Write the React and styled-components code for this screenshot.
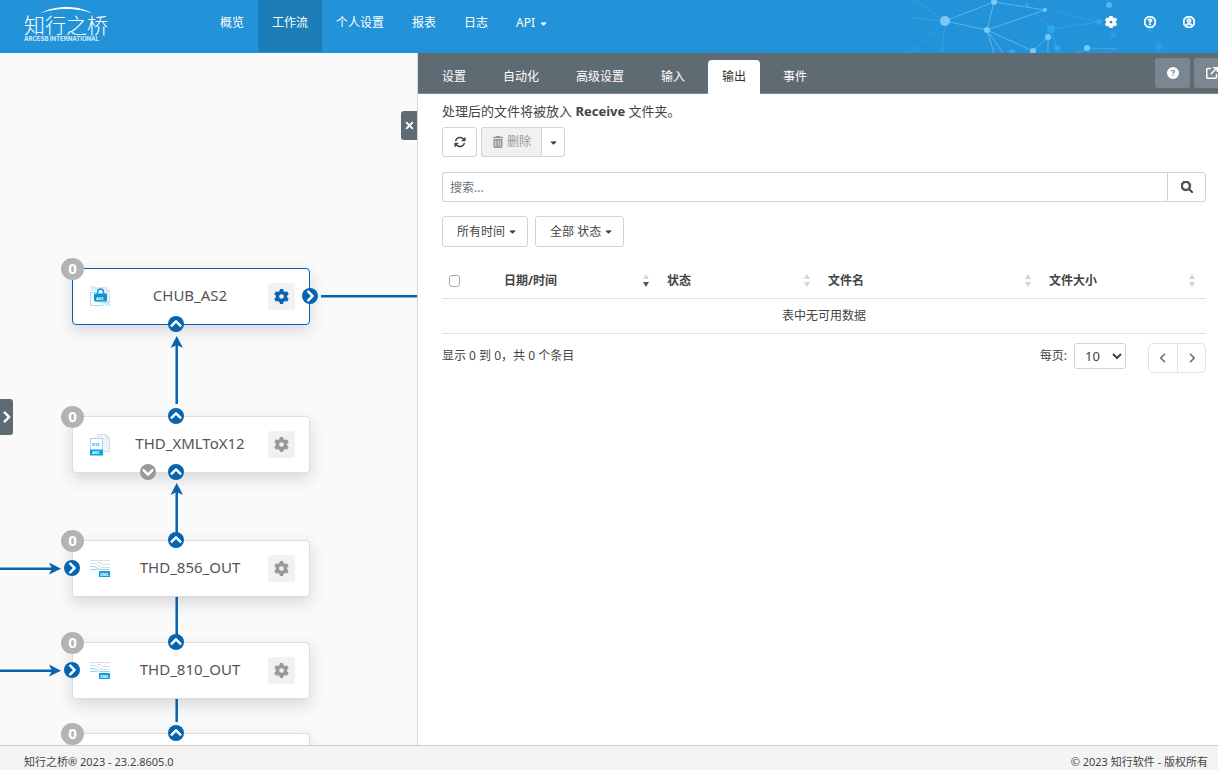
import React, { useState } from 'react';
import styled, { createGlobalStyle, css } from 'styled-components';
import {
  FaGear,
  FaRegCircleQuestion,
  FaRegCircleUser,
  FaCircleQuestion,
  FaArrowUpRightFromSquare,
  FaArrowsRotate,
  FaTrashCan,
  FaMagnifyingGlass,
  FaXmark,
  FaAngleLeft,
  FaAngleRight,
  FaAngleUp,
  FaAngleDown,
  FaCaretDown,
} from 'react-icons/fa6';

const navItems = ['概览', '工作流', '个人设置', '报表', '日志'];
const tabs = ['设置', '自动化', '高级设置', '输入', '输出', '事件'];

// ports are [direction, x, y] measured from the node's corner
const nodes = [
  { id: 1, name: 'CHUB_AS2', icon: 'as2', top: 215, selected: true, ports: [['right', 238, 28], ['up', 104, 56]] },
  { id: 2, name: 'THD_XMLToX12', icon: 'x12', top: 363, ports: [['up', 104, 0], ['down', 76, 56], ['up', 104, 56]] },
  { id: 3, name: 'THD_856_OUT', icon: 'xml', top: 487, ports: [['up', 104, 0], ['right', 0, 28]] },
  { id: 4, name: 'THD_810_OUT', icon: 'xml', top: 589, ports: [['up', 104, 0], ['right', 0, 28]] },
  { id: 5, top: 680, ports: [['up', 104, 0]] },
];

const columns = [
  { label: '日期/时间', width: 163, sorted: true },
  { label: '状态', width: 161 },
  { label: '文件名', width: 221 },
  { label: '文件大小', width: 164 },
];

const portIcons = { up: FaAngleUp, down: FaAngleDown, right: FaAngleRight };

function App() {
  const [tab, setTab] = useState('输出');

  return (
    <Page>
      <GlobalStyle />
      <Header />
      <Main>
        <Flow />
        <Panel>
          <TabBar>
            {tabs.map((label) => (
              <Tab key={label} type="button" $active={tab === label} onClick={() => setTab(label)}>
                {label}
              </Tab>
            ))}
            <TabTools>
              <ToolButton type="button" aria-label="帮助"><FaCircleQuestion /></ToolButton>
              <ToolButton type="button" aria-label="打开"><FaArrowUpRightFromSquare /></ToolButton>
            </TabTools>
          </TabBar>
          <Output />
        </Panel>
      </Main>
      <Footer>
        <span>知行之桥® 2023 - 23.2.8605.0</span>
        <span>© 2023 知行软件 - 版权所有</span>
      </Footer>
    </Page>
  );
}

export default App;

function Header() {
  return (
    <TopBar>
      <Network />
      <Brand href="#" aria-label="知行之桥">
        <svg width="90" height="44" viewBox="0 0 90 44">
          <path d="M16 13.5C29 5.5 54 4.5 68 13.5C54 7.5 30 7.5 16 13.5Z" fill="#fff" />
          <LogoName x="0" y="33">知行之桥</LogoName>
          <LogoSub x="0" y="41">ARCESB INTERNATIONAL</LogoSub>
        </svg>
      </Brand>
      <Nav>
        {navItems.map((item) => (
          <NavLink key={item} href="#" $active={item === '工作流'}>{item}</NavLink>
        ))}
        <NavLink href="#">API <FaCaretDown size={9} /></NavLink>
      </Nav>
      <TopIcons>
        <TopIcon type="button" aria-label="设置"><FaGear /></TopIcon>
        <TopIcon type="button" aria-label="帮助"><FaRegCircleQuestion /></TopIcon>
        <TopIcon type="button" aria-label="用户"><FaRegCircleUser /></TopIcon>
      </TopIcons>
    </TopBar>
  );
}

function Network() {
  return (
    <NetworkSvg width="320" height="53" viewBox="898 0 320 53">
      <g stroke="#8fd0f6" fill="none" opacity=".55">
        <path d="M945 21L994 2L987 30L945 21M994 2L1045 10L987 30L1033 51L1048 37V53M987 30L994 53M987 30L1003 53" />
        <path d="M945 21L915 0M945 21L910 53M945 21L942 53M945 21L912 18" opacity=".4" />
        <path d="M1078 53L1087 48L1118 49" opacity=".6" />
      </g>
      <path d="M1036 14L1051 29L1057 48M1051 29L1099 22L1054 11" stroke="#35aef2" fill="none" opacity=".6" />
      <g fill="#7cc8f5">
        <circle cx="945" cy="21" r="5" />
        <circle cx="994" cy="2" r="3" />
        <circle cx="987" cy="30" r="3" />
        <circle cx="1045" cy="10" r="2" />
        <circle cx="1048" cy="37" r="3" />
        <circle cx="1033" cy="51" r="3" />
        <circle cx="1087" cy="48" r="3" />
        <circle cx="1109" cy="5" r="3" opacity=".6" />
      </g>
      <g fill="#2aa9f0">
        <circle cx="1051" cy="29" r="4" />
        <circle cx="1057" cy="48" r="3" />
        <circle cx="1012" cy="52" r="3" />
        <circle cx="1027" cy="5" r="2" />
        <circle cx="1099" cy="22" r="3" />
        <circle cx="1113" cy="35" r="3" opacity=".5" />
        <circle cx="1159" cy="46" r="4" opacity=".5" />
        <circle cx="1150" cy="29" r="3" opacity=".5" />
      </g>
    </NetworkSvg>
  );
}

function Flow() {
  return (
    <Canvas>
      <Wires>
        <g stroke="#0664b1" strokeWidth="2.5">
          <path d="M321 243.3H900" />
          <path d="M176.7 289V351M176.7 437V481M176.7 544V585M176.7 646V669" />
          <path d="M0 515.7H54M0 617.7H54" />
        </g>
        <g fill="#0664b1">
          <path d="M176.7 283L183 295L176.7 292L170.5 295Z" />
          <path d="M176.7 430L183 442L176.7 439L170.5 442Z" />
          <path d="M61 515.7L49 509.5L52 515.7L49 521.5Z" />
          <path d="M61 617.7L49 611.5L52 617.7L49 623.5Z" />
        </g>
      </Wires>
      {nodes.map((node) => (
        <Node key={node.id} $top={node.top} $selected={node.selected}>
          {node.name && (
            <>
              <NodeIcon kind={node.icon} />
              <NodeName>{node.name}</NodeName>
              <NodeButton type="button" aria-label={node.name} $selected={node.selected}><FaGear /></NodeButton>
            </>
          )}
          <Badge>0</Badge>
          {node.ports.map(([dir, x, y]) => {
            const Icon = portIcons[dir];
            return <Port key={`${x}-${y}`} $x={x} $y={y} $muted={dir === 'down'}><Icon /></Port>;
          })}
        </Node>
      ))}
      <Drawer type="button" aria-label="展开"><FaAngleRight /></Drawer>
      <CloseTab type="button" aria-label="关闭"><FaXmark /></CloseTab>
    </Canvas>
  );
}

function NodeIcon({ kind }) {
  if (kind === 'as2') {
    return (
      <svg width="22" height="22" viewBox="0 0 22 22" fill="none">
        <path d="M7.500 1.500H16L19.500 5V16.500H7.500Z" fill="#eef0f5" stroke="#dfe2ea" />
        <path d="M16 1.500V5H19.500" stroke="#d9dce6" />
        <path d="M6 6.500H.5V19.500H12.500V17" stroke="#a5def7" />
        <path d="M1 .5L3 2.500L1 4.500M4 .5L6 2.500L4 4.500M17 15.500L15 17.500L17 19.500M20 15.500L18 17.500L20 19.500" stroke="#4fbdec" strokeWidth=".8" />
        <path d="M7.500 8V6A3 3 0 0 1 13.500 6V8" stroke="#0796d8" strokeWidth="1.400" />
        <rect x="4" y="7.500" width="13" height="8" rx="1" fill="#0796d8" />
        <IconText x="6" y="13.500">AS2</IconText>
      </svg>
    );
  }
  if (kind === 'x12') {
    return (
      <svg width="22" height="22" viewBox="0 0 22 22" fill="none">
        <path d="M7.500 .5H16L19.500 4V17.500H7.500Z" fill="#f1f2f6" stroke="#dcdee6" />
        <path d="M16 .5V4H19.500" stroke="#dcdee6" />
        <rect x=".5" y="4.500" width="12" height="16" fill="#fff" stroke="#9bdcf7" />
        <IconText x="2" y="12" $blue>X12</IconText>
        <rect x="0" y="15.500" width="13" height="6" fill="#0ba0e0" />
        <IconText x="2" y="20">ASC</IconText>
      </svg>
    );
  }
  return (
    <svg width="22" height="22" viewBox="0 0 22 22" fill="none">
      <path d="M0 2.500H20M0 5.500H5L11 9.500H20M7 4.500H10L13 6.500H20" stroke="#cfd4de" strokeWidth=".8" />
      <path d="M0 8.500H4L10 11.500H20M0 11.500H7" stroke="#83c9eb" strokeWidth=".8" />
      <rect x="9" y="13" width="11" height="6" fill="#0ba0e0" />
      <IconText x="10" y="17.500">XML</IconText>
    </svg>
  );
}

function Output() {
  return (
    <Content>
      <Hint>处理后的文件将被放入 <b>Receive</b> 文件夹。</Hint>
      <Actions>
        <IconButton type="button" aria-label="刷新"><FaArrowsRotate /></IconButton>
        <Split>
          <DeleteButton type="button" disabled><FaTrashCan />删除</DeleteButton>
          <SplitToggle type="button" aria-label="更多"><FaCaretDown size={9} /></SplitToggle>
        </Split>
      </Actions>
      <Search>
        <SearchInput type="text" placeholder="搜索..." aria-label="搜索" />
        <SearchButton type="button" aria-label="搜索"><FaMagnifyingGlass /></SearchButton>
      </Search>
      <Filters>
        <FilterButton type="button">所有时间<FaCaretDown size={9} /></FilterButton>
        <FilterButton type="button">全部 状态<FaCaretDown size={9} /></FilterButton>
      </Filters>
      <Table>
        <colgroup>
          <Col $width={55} />
          {columns.map((col) => <Col key={col.label} $width={col.width} />)}
        </colgroup>
        <thead>
          <tr>
            <Th><Checkbox type="checkbox" aria-label="全选" /></Th>
            {columns.map((col) => (
              <Th key={col.label}>
                <Sortable>
                  {col.label}
                  <svg width="8" height="14" viewBox="0 0 8 14">
                    <path d="M4 0L7 5H1Z" fill="#d3d5d8" />
                    <path d="M4 13L7 8H1Z" fill={col.sorted ? '#555' : '#d3d5d8'} />
                  </svg>
                </Sortable>
              </Th>
            ))}
          </tr>
        </thead>
        <tbody>
          <tr><Empty colSpan={5}>表中无可用数据</Empty></tr>
        </tbody>
      </Table>
      <Pager>
        <PagerInfo>显示 0 到 0，共 0 个条目</PagerInfo>
        <PageSize>
          每页:
          <PageSelect defaultValue="10">
            <option>10</option>
            <option>25</option>
            <option>50</option>
          </PageSelect>
        </PageSize>
        <PageButtons>
          <PageButton type="button" aria-label="上一页"><FaAngleLeft /></PageButton>
          <PageButton type="button" aria-label="下一页"><FaAngleRight /></PageButton>
        </PageButtons>
      </Pager>
    </Content>
  );
}

const GlobalStyle = createGlobalStyle`
  * {
    box-sizing: border-box;
  }

  body {
    margin: 0;
    color: #444;
    font-family: "Noto Sans", "Noto Sans CJK SC", sans-serif;
    font-size: 12px;
    line-height: 18px;
  }

  button, input, select {
    margin: 0;
    font: inherit;
    color: inherit;
  }

  button {
    display: flex;
    align-items: center;
    justify-content: center;
    padding: 0;
    border: 0;
    cursor: pointer;
  }
`

// thickens the outline of the thinner glyph icons
const boldIcon = css`
  svg path {
    stroke: currentColor;
    stroke-width: 36;
  }
`

const Page = styled.div`
  display: flex;
  flex-direction: column;
  height: 100vh;
  overflow: hidden;
`

const TopBar = styled.header`
  position: relative;
  display: flex;
  flex: none;
  height: 53px;
  padding: 0 10px 1px 24px;
  background: #2293d8;
  color: #fff;
`

const NetworkSvg = styled.svg`
  position: absolute;
  top: 0;
  right: 0;
`

const Brand = styled.a`
  width: 182px;
`

const LogoName = styled.text`
  fill: #fff;
  font-family: "Noto Sans CJK SC", sans-serif;
  font-size: 21px;
  font-weight: 300;
`

const LogoSub = styled.text`
  fill: #d5ebf9;
  font-family: Inter, sans-serif;
  font-size: 6px;
  font-weight: 700;
`

const Nav = styled.nav`
  display: flex;
`

const NavLink = styled.a`
  display: flex;
  align-items: center;
  gap: 4px;
  padding: 0 14px 6px;
  color: #fff;
  text-decoration: none;
  background: ${props => props.$active ? '#1c7db8' : 'transparent'};
`

const TopIcons = styled.div`
  position: relative;
  display: flex;
  margin-left: auto;
  padding-bottom: 8px;
`

const TopIcon = styled.button`
  ${boldIcon}
  width: 39px;
  background: none;
  font-size: 12px;
`

const Main = styled.main`
  display: grid;
  grid-template-columns: minmax(0, 417fr) minmax(0, 801fr);
  flex: 1;
  min-height: 0;
`

const Canvas = styled.section`
  position: relative;
  overflow: hidden;
  background: #fafafa;
`

const Wires = styled.svg`
  position: absolute;
  width: 100%;
  height: 100%;
  fill: none;
`

const Node = styled.div`
  position: absolute;
  top: ${props => props.$top}px;
  left: 72px;
  display: flex;
  align-items: center;
  width: 238px;
  height: 57px;
  padding: 0 14px 0 17px;
  border: 1px solid ${props => props.$selected ? '#0664b1' : '#ddd'};
  border-radius: 4px;
  background: #fff;
  box-shadow: 0 6px 16px rgba(40, 40, 60, .16);
`

const NodeName = styled.span`
  flex: 1;
  padding-bottom: 4px;
  color: #555;
  font-size: 15px;
  line-height: 20px;
  text-align: center;
`

const IconText = styled.text`
  fill: ${props => props.$blue ? '#0ba0e0' : '#fff'};
  font-size: 4px;
  font-weight: 700;
`

const NodeButton = styled.button`
  width: 27px;
  height: 27px;
  border-radius: 3px;
  background: #f1f1f1;
  color: ${props => props.$selected ? '#0664b1' : '#999'};
  font-size: 15px;
`

const Badge = styled.span`
  position: absolute;
  top: -11px;
  left: -12px;
  width: 23px;
  height: 22px;
  border-radius: 50%;
  background: #b3b3b3;
  color: #fff;
  font-size: 15px;
  font-weight: 700;
  line-height: 20px;
  text-align: center;
`

const Port = styled.span`
  ${boldIcon}
  position: absolute;
  top: ${props => props.$y - 9}px;
  left: ${props => props.$x - 9}px;
  display: flex;
  align-items: center;
  justify-content: center;
  width: 16px;
  height: 16px;
  border-radius: 50%;
  background: ${props => props.$muted ? '#999' : '#0664b1'};
  color: #fff;
  font-size: 14px;
`

const sideTab = css`
  ${boldIcon}
  position: absolute;
  background: #5f6b73;
  color: #fff;
`

const Drawer = styled.button`
  ${sideTab}
  top: 50%;
  left: 0;
  width: 13px;
  height: 36px;
  border-radius: 0 3px 3px 0;
  font-size: 14px;
`

const CloseTab = styled.button`
  ${sideTab}
  top: 58px;
  right: 0;
  width: 16px;
  height: 29px;
  border-radius: 3px 0 0 3px;
  font-size: 11px;
`

const Panel = styled.section`
  display: flex;
  flex-direction: column;
  border-left: 1px solid #d5d8da;
  background: #fff;
`

const TabBar = styled.div`
  display: flex;
  align-items: flex-end;
  gap: 9px;
  height: 41px;
  padding-left: 10px;
  overflow: hidden;
  background: linear-gradient(to top, #7d8994 1px, #5f6b73 1px);
`

const Tab = styled.button`
  height: 34px;
  padding: 0 14px;
  border-radius: 4px 4px 0 0;
  background: ${props => props.$active ? '#fff' : 'transparent'};
  color: ${props => props.$active ? '#333' : '#fff'};
`

const TabTools = styled.div`
  display: flex;
  align-self: flex-start;
  gap: 4px;
  margin: 5px -11px 0 auto;
`

const ToolButton = styled.button`
  width: 35px;
  height: 30px;
  border-radius: 3px;
  background: #7a8690;
  color: #fff;
  font-size: 12px;
`

const Content = styled.div`
  padding: 8px 12px 0 24px;
`

const Hint = styled.p`
  margin: 0 0 7px;
  font-size: 13px;
`

const Actions = styled.div`
  display: flex;
  gap: 4px;
  margin-bottom: 15px;
`

const OutlineButton = styled.button`
  height: 30px;
  border: 1px solid #ced4da;
  border-radius: 3px;
  background: #fff;
`

const IconButton = styled(OutlineButton)`
  width: 35px;
`

const Split = styled.div`
  display: flex;
`

const DeleteButton = styled(OutlineButton)`
  gap: 3px;
  width: 60px;
  border-right: 0;
  border-radius: 3px 0 0 3px;
  background: #f1f1f1;
  color: #999;
`

const SplitToggle = styled(OutlineButton)`
  width: 24px;
  border-radius: 0 3px 3px 0;
`

const Search = styled.div`
  display: flex;
  margin-bottom: 14px;
`

const SearchInput = styled.input`
  flex: 1;
  min-width: 0;
  height: 30px;
  padding: 0 7px;
  border: 1px solid #ced4da;
  border-right: 0;
  border-radius: 3px 0 0 3px;

  &::placeholder {
    color: #6c757d;
  }
`

const SearchButton = styled(OutlineButton)`
  ${boldIcon}
  width: 39px;
  border-radius: 0 3px 3px 0;
`

const Filters = styled.div`
  display: flex;
  gap: 7px;
  margin-bottom: 18px;
`

const FilterButton = styled(OutlineButton)`
  gap: 3px;
  height: 31px;
  padding: 0 10px 0 14px;
`

const Table = styled.table`
  width: 100%;
  table-layout: fixed;
  border-collapse: collapse;
`

const Col = styled.col`
  width: ${props => props.$width}px;
`

const Th = styled.th`
  height: 33px;
  padding: 0 10px 0 7px;
  border-bottom: 1px solid #dee2e6;
  text-align: left;
`

const Sortable = styled.div`
  display: flex;
  align-items: center;
  justify-content: space-between;
`

const Checkbox = styled.input`
  display: block;
  appearance: none;
  width: 11px;
  height: 12px;
  border: 1px solid #aaa;
  border-radius: 3px;
`

const Empty = styled.td`
  height: 35px;
  padding: 0;
  border-bottom: 1px solid #dee2e6;
  text-align: center;
`

const Pager = styled.div`
  display: flex;
  align-items: flex-start;
  margin-top: 9px;
`

const PagerInfo = styled.span`
  margin: 4px auto 0 0;
`

const PageSize = styled.label`
  display: flex;
  align-items: center;
  gap: 7px;
`

const PageSelect = styled.select`
  width: 52px;
  height: 26px;
  padding-left: 6px;
  border: 1px solid #ced4da;
  border-radius: 3px;
  background: #fff;
  font-size: 13px;
`

const PageButtons = styled.div`
  display: flex;
  margin-left: 22px;
  border: 1px solid #dee2e6;
  border-radius: 5px;
`

const PageButton = styled.button`
  width: 28px;
  height: 28px;
  background: none;
  color: #666;

  & + & {
    border-left: 1px solid #dee2e6;
  }
`

const Footer = styled.footer`
  display: flex;
  justify-content: space-between;
  flex: none;
  height: 25px;
  padding: 8px 10px 0 24px;
  border-top: 1px solid #ccc;
  background: #f4f4f4;
  font-size: 11px;
  line-height: 16px;
`
